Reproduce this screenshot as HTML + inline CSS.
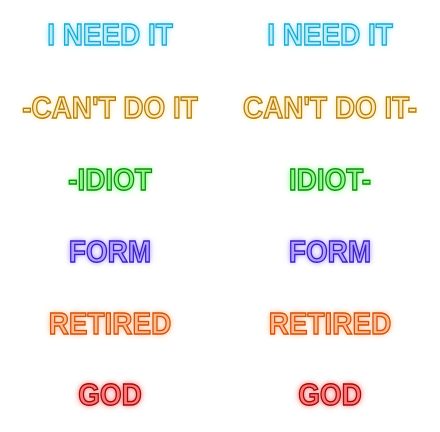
<!DOCTYPE html>
<html><head><style>
html,body{margin:0;padding:0;background:#fff;width:440px;height:432px;overflow:hidden}
.t{position:absolute;width:220px;text-align:center;font-family:"Liberation Sans",sans-serif;font-weight:900;font-size:31px;line-height:32px;white-space:nowrap;-webkit-text-stroke:1.4px;transform:scaleX(0.9)}
.c{color:#b4eefc;-webkit-text-stroke-color:#1fa7cc;text-shadow:0 0 5px #9fe8ff,0 0 8px #c0f2ff}
.o{color:#ffe8b4;-webkit-text-stroke-color:#b07f10;text-shadow:0 0 5px #ffe6a0,0 0 8px #fff0c0}
.g{color:#8cf888;-webkit-text-stroke-color:#138a13;text-shadow:0 0 5px #7fff7f,0 0 8px #aaffaa}
.p{color:#b4a4ff;-webkit-text-stroke-color:#3b1fc4;text-shadow:0 0 5px #a390ff,0 0 8px #c8bcff}
.r{color:#ffbb90;-webkit-text-stroke-color:#d0520e;text-shadow:0 0 5px #ffb98a,0 0 8px #ffd0b0}
.d{color:#ff7878;-webkit-text-stroke-color:#9c0d0d;text-shadow:0 0 5px #ff7070,0 0 8px #ff9a9a}
</style></head><body>
<div class="t c" style="left:0;top:19px">I NEED IT</div>
<div class="t c" style="left:220px;top:19px">I NEED IT</div>
<div class="t o" style="left:0;top:92px">-CAN'T DO IT</div>
<div class="t o" style="left:220px;top:92px">CAN'T DO IT-</div>
<div class="t g" style="left:0;top:164px">-IDIOT</div>
<div class="t g" style="left:220px;top:164px">IDIOT-</div>
<div class="t p" style="left:0;top:236px">FORM</div>
<div class="t p" style="left:220px;top:236px">FORM</div>
<div class="t r" style="left:0;top:308px">RETIRED</div>
<div class="t r" style="left:220px;top:308px">RETIRED</div>
<div class="t d" style="left:0;top:379px">GOD</div>
<div class="t d" style="left:220px;top:379px">GOD</div>
</body></html>
